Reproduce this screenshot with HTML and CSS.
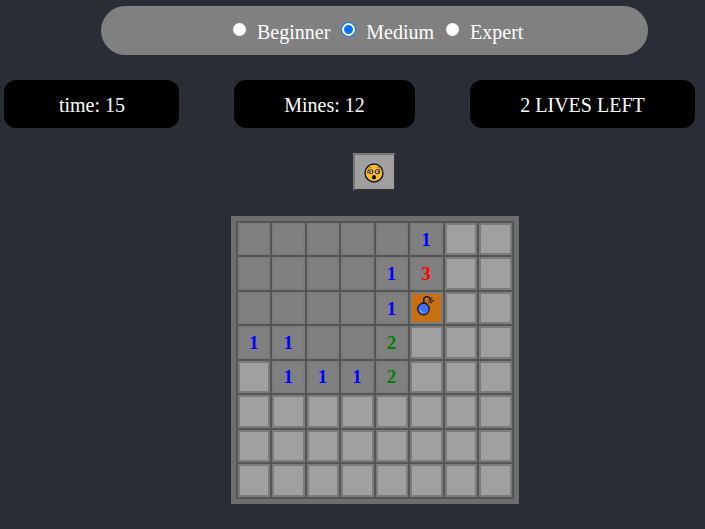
FILE: index.html
```html
<!DOCTYPE html>
<html lang="en">
<head>
<meta charset="utf-8">
<title>Minesweeper</title>
<link rel="stylesheet" href="styles.css">
</head>
<body>
<form class="levels">
  <label><input type="radio" name="level"><span>Beginner</span></label>
  <label><input type="radio" name="level" checked><span>Medium</span></label>
  <label><input type="radio" name="level"><span>Expert</span></label>
</form>
<div class="stats">
  <div class="stat time">time: 15</div>
  <div class="stat mines">Mines: 12</div>
  <div class="stat lives">2 LIVES LEFT</div>
</div>
<button class="reset" type="button" aria-label="New game">
  <svg width="20" height="20" viewBox="0 0 20 20">
    <circle cx="10" cy="10" r="9" fill="#fdb92e" stroke="#15171c" stroke-width="1.4"/>
    <path d="M4.3 5.4q1.3-1.3 3-1M15.7 5.4q-1.3-1.3-3-1" fill="none" stroke="#a86b12" stroke-width=".8"/>
    <g fill="#f4c76a" stroke="#1b1814" stroke-width="1">
      <path d="M4 10.6V7.4q2.4-1.6 4.8 0v2.5q-1.7 1.5-3 .2-.6-1.9.9-1.7"/>
      <path d="M16.2 7.2q-2.4-1.4-4.8.2v2.5q2 1.8 4 .2 1.2-1.9-.6-2-1.5.3-.8 1.6"/>
    </g>
    <ellipse cx="10" cy="14.2" rx="2" ry="2.2" fill="#111"/>
  </svg>
</button>
<div class="board">
  <i class="o"></i><i class="o"></i><i class="o"></i><i class="o"></i><i class="o"></i><i class="o n1">1</i><i></i><i></i>
  <i class="o"></i><i class="o"></i><i class="o"></i><i class="o"></i><i class="o n1">1</i><i class="o n3">3</i><i></i><i></i>
  <i class="o"></i><i class="o"></i><i class="o"></i><i class="o"></i><i class="o n1">1</i><i class="bomb"><svg width="20" height="22" viewBox="0 0 20 22">
    <path d="M8.3 7C6.5 3.6 8.5 1.6 11 1.7s3.8 2.1 2.7 4.5" fill="none" stroke="#17191f" stroke-width="1.5"/>
    <path d="M14.2 4.3l2-1.7M14.6 5.8l3.6-.2M14.2 6.8l1.7 1.5M12.7 6.700l-.2 1.700" stroke="#3b2510" stroke-width="1.2"/>
    <path d="M6.600 6.500l4.600 1.700-1 2.500-4.600-1.600z" fill="#17191f"/>
    <circle cx="7.500" cy="14" r="5.800" fill="#416fff" stroke="#17191f" stroke-width="1.300"/>
    <path d="M4 14.500q.6 2.600 2.800 3" fill="none" stroke="#9ab9ff" stroke-width="1"/>
  </svg></i><i></i><i></i>
  <i class="o n1">1</i><i class="o n1">1</i><i class="o"></i><i class="o"></i><i class="o n2">2</i><i></i><i></i><i></i>
  <i></i><i class="o n1">1</i><i class="o n1">1</i><i class="o n1">1</i><i class="o n2">2</i><i></i><i></i><i></i>
  <i></i><i></i><i></i><i></i><i></i><i></i><i></i><i></i>
  <i></i><i></i><i></i><i></i><i></i><i></i><i></i><i></i>
  <i></i><i></i><i></i><i></i><i></i><i></i><i></i><i></i>
</div>
</body>
</html>
```

FILE: styles.css
```css
* { box-sizing: border-box; }
html { background: #292d35; }
body {
  margin: 0;
  height: 529px;
  overflow: hidden;
  color: #fff;
  font: 20px "Liberation Serif", "Times New Roman", serif;
}
.levels {
  display: flex;
  width: 547px;
  height: 49px;
  margin: 6px 0 0 101px;
  padding: 4px 0 0 132px;
  border-radius: 25px;
  background: #808080;
}
.levels label { display: flex; align-items: center; }
.levels label + label { margin-left: 12px; }
.levels input {
  appearance: none;
  width: 13px;
  height: 13px;
  margin: 0 11px 6px 0;
  border-radius: 50%;
  background: #fff;
}
.levels input:checked {
  border: 2px solid #fff;
  background: #0075ff;
  background-clip: padding-box;
  box-shadow: 0 0 0 1px #0075ff;
}
.stats {
  display: flex;
  gap: 55px;
  margin: 25px 0 0 4px;
}
.stat {
  width: 175px;
  height: 48px;
  border-radius: 12px;
  background: #000;
  line-height: 50px;
  text-align: center;
}
.time { padding-left: 1px; }
.mines { width: 181px; }
.lives { width: 225px; }
.reset {
  display: flex;
  align-items: center;
  justify-content: center;
  width: 43px;
  height: 38px;
  margin: 25px 0 0 353px;
  padding: 2px 1px 0 0;
  border: 2px solid;
  border-color: #767676 #313131 #313131 #767676;
  background: #a0a0a0;
}
.board {
  display: grid;
  grid-template-columns: repeat(8, 32.45px);
  grid-template-rows: repeat(8, 32.45px);
  gap: 2px;
  width: 288px;
  height: 288px;
  margin: 25px 0 0 231px;
  padding: 2px;
  border: 5px solid #6e6e6e;
  background: #555;
}
.board i {
  display: flex;
  align-items: center;
  justify-content: center;
  min-width: 0;
  min-height: 0;
  border: 2px solid #7b7b7b;
  background: #a0a0a0;
  font-size: 19px;
  font-style: normal;
  font-weight: bold;
}
.board .o { padding: 1px 1px 0 0; background: #808080; }
.board .n1 { color: #00f; }
.board .n2 { color: green; }
.board .n3 { color: red; }
.board .bomb { background: #c8700f; }
.bomb svg { margin-bottom: 4px; }
```
